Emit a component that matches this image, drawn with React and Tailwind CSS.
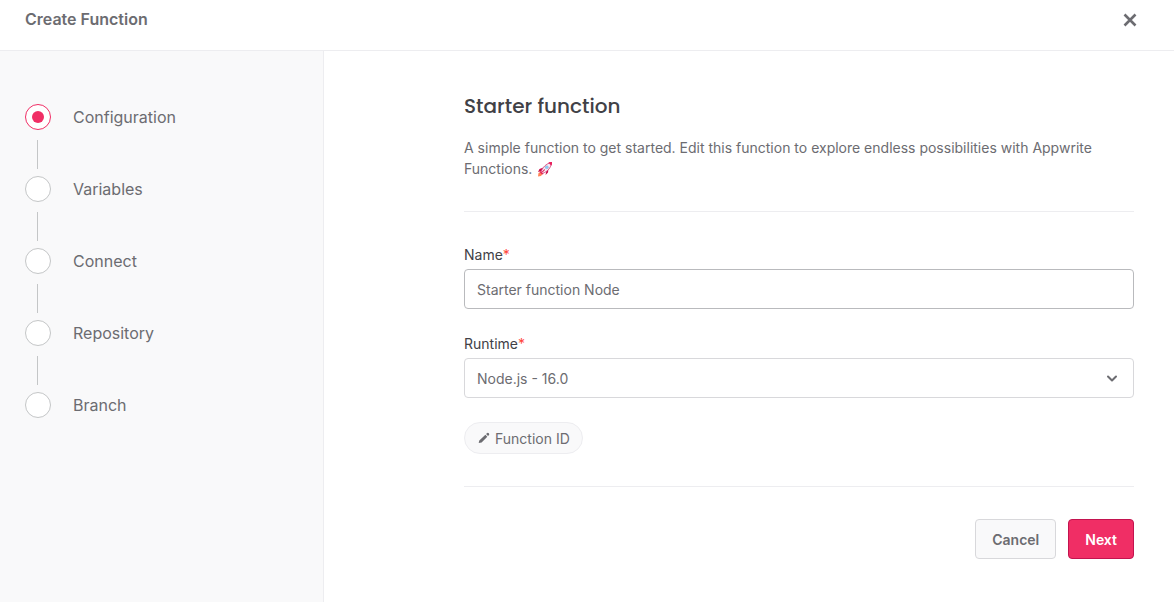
const steps = ['Configuration', 'Variables', 'Connect', 'Repository', 'Branch'];

function Rocket() {
  return (
    <svg role="img" aria-label="rocket" viewBox="0 0 32 32" className="ml-px inline-block size-4 align-[-3px]">
      <path d="M13 13 5 16l-3 6 7-2zM19 19l-2 9 5-5 1-8z" fill="#ca0b4a" />
      <path d="M2 31l1-7 4-2 4 4-3 4z" fill="#ff8257" />
      <path d="M8 22C11 13 18 5 29 3c-1 11-8 18-18 22z" fill="#f3eef7" stroke="#d62f6b" strokeWidth="1.6" />
      <path d="M23 2.500l7-.5-.5 7c-3-1-5.500-3.500-6.500-6.500z" fill="#e81c5a" />
      <path d="M7 20l6 6-3 1-5-5z" fill="#e32659" />
      <circle cx="19.500" cy="12.500" r="3.200" fill="#83cbff" stroke="#aab" strokeWidth="1" />
      <path d="M9 22l6-6 1 2-5 5z" fill="#e32659" />
    </svg>
  );
}

function Step({ label, active, last }) {
  return (
    <li className={last ? 'h-[26px]' : 'h-[72px]'} aria-current={active ? 'step' : undefined}>
      <div className="flex items-center gap-[22px]">
        <span
          className={
            active
              ? 'flex size-[26px] items-center justify-center rounded-full border border-[#f02e65] bg-white'
              : 'flex size-[26px] items-center justify-center rounded-full border border-[#c4c6c7] bg-white'
          }
        >
          {active && <span className="size-3 rounded-full bg-[#f02e65]" />}
        </span>
        <span className="text-base leading-6">{label}</span>
      </div>
      {!last && <div className="mt-[10px] ml-3 h-[29px] w-px bg-[#c4c6c7]" />}
    </li>
  );
}

export default function App() {
  return (
    <div className="flex min-h-screen flex-col bg-white font-['Inter',sans-serif] text-sm leading-[21px] text-[#6c6c71]">
      <header className="flex h-[51px] items-start justify-between border-b border-[#ededf0] pt-[7px] pr-9 pl-[25px]">
        <h1 className="text-base leading-6 font-semibold">Create Function</h1>
        <button type="button" aria-label="Close" className="flex h-[26px] w-4 items-center justify-center">
          <svg viewBox="0 0 16 16" className="size-4" fill="none" stroke="currentColor" strokeWidth="2.6">
            <path d="M2.500 2.500l11 11M13.500 2.500l-11 11" />
          </svg>
        </button>
      </header>
      <div className="flex flex-1">
        <aside className="w-[324px] shrink-0 border-r border-[#ededf0] bg-[#f9f9fa] px-[25px] pt-[53px]">
          <ol>
            {steps.map((label, i) => (
              <Step key={label} label={label} active={i === 0} last={i === steps.length - 1} />
            ))}
          </ol>
        </aside>
        <main className="min-w-0 flex-1 pt-10 pr-10 pb-10 pl-[140px]">
          <h2 className="font-['Poppins','Inter',sans-serif] text-xl leading-[30px] font-medium text-[#414146]">
            Starter function
          </h2>
          <p className="mt-4 border-b border-[#ededf0] pb-8">
            A simple function to get started. Edit this function to explore endless possibilities with Appwrite
            Functions. <Rocket />
          </p>
          <form className="pt-8">
            <label htmlFor="name" className="block text-[#414146]">
              Name<span className="text-[#ff453a]">*</span>
            </label>
            <input
              id="name"
              type="text"
              defaultValue="Starter function Node"
              className="mt-1 block h-10 w-full rounded border border-[#b9babd] bg-white px-3 text-sm text-[#6c6c71]"
            />
            <label htmlFor="runtime" className="mt-6 block text-[#414146]">
              Runtime<span className="text-[#ff453a]">*</span>
            </label>
            <div className="relative mt-1">
              <select
                id="runtime"
                className="block h-10 w-full appearance-none rounded border border-[#d8d8db] bg-white px-3 pt-px text-sm text-[#6c6c71]"
              >
                <option>Node.js - 16.0</option>
              </select>
              <svg
                viewBox="0 0 16 16"
                className="pointer-events-none absolute top-3 right-[14px] size-4"
                fill="none"
                stroke="currentColor"
                strokeWidth="2"
                strokeLinecap="round"
                strokeLinejoin="round"
              >
                <path d="M4 6.500l4 4 4-4" />
              </svg>
            </div>
            <button
              type="button"
              className="mt-6 flex h-8 items-center gap-1 rounded-full border border-[#ededf0] bg-[#f9f9fa] px-3"
            >
              <svg viewBox="0 0 14 14" className="size-[14px]" fill="currentColor">
                <path d="M9.900 2.300a1.300 1.300 0 0 1 1.900 0 1.300 1.300 0 0 1 0 1.900l-.8.8-1.900-1.900zM8.400 3.800l1.900 1.900-5.700 5.700-2.900.7.600-2.500z" />
              </svg>
              Function ID
            </button>
            <div className="mt-8 flex justify-end gap-3 border-t border-[#ededf0] pt-8">
              <button
                type="button"
                className="h-10 rounded border border-[#d8d8db] bg-[#f9f9fa] px-4 font-semibold"
              >
                Cancel
              </button>
              <button
                type="button"
                className="h-10 rounded border border-[#c3134f] bg-[#f02e65] px-4 font-semibold text-white"
              >
                Next
              </button>
            </div>
          </form>
        </main>
      </div>
    </div>
  );
}
